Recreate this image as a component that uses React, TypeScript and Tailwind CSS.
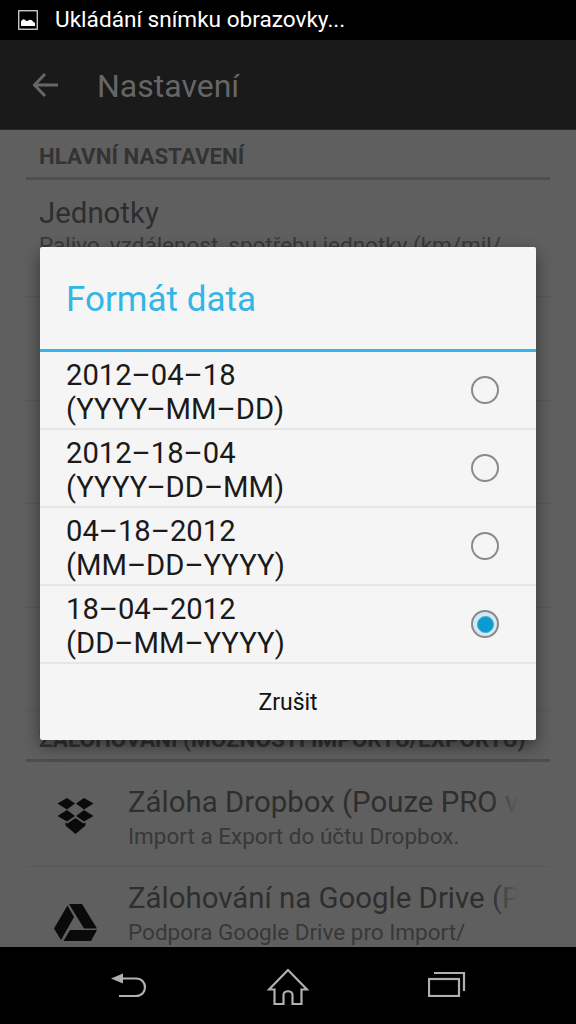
import React from 'react';

const dateFormats = [
  { date: '2012–04–18', mask: '(YYYY–MM–DD)', checked: false },
  { date: '2012–18–04', mask: '(YYYY–DD–MM)', checked: false },
  { date: '04–18–2012', mask: '(MM–DD–YYYY)', checked: false },
  { date: '18–04–2012', mask: '(DD–MM–YYYY)', checked: true },
];

function PictureIcon() {
  return (
    <svg width="20" height="20" viewBox="0 0 20 20" className="shrink-0">
      <rect x="0.75" y="0.75" width="18.5" height="18.5" fill="none" stroke="#e8e8e8" strokeWidth="1.2" />
      <path d="M3 16v-4.500c1-1.500 2.300-2.500 3.400-2 1 .5 1.600 1.600 2.800 1.500 1.100-.1 1.800-1.300 3-1.300 1.300 0 2.800 1.800 4.800 3.300V16z" fill="#fff" />
    </svg>
  );
}

function ToolbarBack() {
  return (
    <svg width="26" height="26" viewBox="0 0 26 26" fill="none" stroke="#666" strokeWidth="3">
      <path d="M26 13H3M13 2L2.500 13 13 24" />
    </svg>
  );
}

function DropboxIcon() {
  return (
    <svg width="37" height="37" viewBox="0 0 37 37" fill="#0a0a0a">
      <path d="M10 1l8 5.500-8 6-9.500-6zM27 1l9.500 5.500-9.500 6-8-6zM10 13l8 6-8 5.500-9.500-5.500zM27 13l9.500 6-9.500 5.500-8-5.500z" />
      <path d="M18.500 21l8 5.500 2-1v3L18.500 37 8.500 28.500v-3l2 1z" />
    </svg>
  );
}

function DriveIcon() {
  return (
    <svg width="43" height="38" viewBox="0 0 43 38" fill="#0a0a0a">
      <path d="M15 0h13l15 24.500H30L15 0z" />
      <path d="M13.500 1.500l6.500 11.500L7 36 0 24.500z" />
      <path d="M9.500 37l6.500-11h27L37 37z" />
    </svg>
  );
}

function SettingRow({ title, subtitle }: { title?: string; subtitle?: string }) {
  if (!title) return <div className="h-[103.500px] border-b border-[#585858]" />;
  return (
    <div className="h-[117px] px-[13px] pt-[15px] border-b border-[#585858] overflow-hidden">
      <div className="text-[29.400px] leading-[36px] text-[#2e2e2e] whitespace-nowrap">{title}</div>
      <div className="text-[22.500px] leading-[26px] text-[#383838] mt-[1px] whitespace-nowrap">{subtitle}</div>
    </div>
  );
}

function IconRow({ icon, title, subtitle, tall }: { icon: React.ReactNode; title: string; subtitle: string; tall?: boolean }) {
  return (
    <div className={`flex border-b border-[#585858] shrink-0 ${tall ? 'h-[118px]' : 'h-[105px]'}`}>
      <div className={`w-[102px] flex justify-center items-center pr-[3px] ${tall ? 'pb-[5px]' : 'pt-[2px]'}`}>{icon}</div>
      <div className={`w-[391px] overflow-hidden ${tall ? 'pt-[13px]' : 'pt-[22px]'}`}>
        <div className="relative text-[29.400px] leading-[36px] text-[#2e2e2e] whitespace-nowrap overflow-hidden">
          {title}
          <div className="absolute right-0 top-0 bottom-0 w-[28px] bg-gradient-to-r from-transparent to-[#5f5f5f]" />
        </div>
        <div className="text-[22.500px] leading-[26px] text-[#383838] mt-[3px] whitespace-nowrap">{subtitle}</div>
      </div>
    </div>
  );
}

function RadioMark({ checked }: { checked: boolean }) {
  return (
    <div className={`w-[28px] h-[28px] rounded-full border-2 border-[#8a8a8a] flex items-center justify-center ${checked ? 'bg-[#cfe9f5]' : ''}`}>
      {checked && <div className="w-[17px] h-[17px] rounded-full bg-[#0a9bd1] border border-[#4aa8c8]" />}
    </div>
  );
}

export default function App() {
  return (
    <div className="relative w-[576px] h-[1024px] overflow-hidden flex flex-col bg-[#5f5f5f] font-['Roboto',sans-serif]">
      {/* status bar */}
      <div className="h-[40px] bg-black flex items-center pl-[18px] gap-[17px] shrink-0">
        <PictureIcon />
        <span className="text-[22.600px] text-white">Ukládání snímku obrazovky...</span>
      </div>

      {/* action bar */}
      <div className="h-[90px] bg-[#1a1a1a] flex items-center pl-[32px] gap-[39px] shrink-0 border-b border-[#2a2a2a]">
        <ToolbarBack />
        <span className="text-[32px] leading-[36px] pt-[2px] text-[#666]">Nastavení</span>
      </div>

      {/* settings list behind the dialog */}
      <div className="flex-1 min-h-0 overflow-hidden px-[26px]">
        <div className="h-[50px] flex flex-col justify-end border-b-[3px] border-[#4d4d4d] px-[13px] pb-[8px]">
          <span className="text-[22.300px] leading-[26px] font-bold text-[#333]">HLAVNÍ NASTAVENÍ</span>
        </div>
        <SettingRow title="Jednotky" subtitle="Palivo, vzdálenost, spotřebu jednotky (km/mil/" />
        <SettingRow />
        <SettingRow />
        <SettingRow />
        <SettingRow />
        <div className="h-[51px] flex flex-col justify-end border-b-[3px] border-[#4d4d4d] px-[13px] pb-[7px]">
          <span className="text-[22.500px] leading-[26px] font-bold text-[#333] whitespace-nowrap">ZÁLOHOVÁNÍ (MOŽNOSTI IMPORTU/EXPORTU)</span>
        </div>
        <IconRow icon={<DropboxIcon />} title="Záloha Dropbox (Pouze PRO verze)" subtitle="Import a Export do účtu Dropbox." />
        <IconRow tall icon={<DriveIcon />} title="Zálohování na Google Drive (Pouze PRO)" subtitle="Podpora Google Drive pro Import/" />
      </div>

      {/* nav bar */}
      <div className="relative h-[77px] bg-black shrink-0 flex items-start justify-between pl-[110px] pr-[110px] pt-[21px]">
        <svg width="38" height="28" viewBox="0 0 38 28" fill="none" stroke="#b0b0b0" strokeWidth="2.200" className="mt-[3px]">
          <path d="M10 7.500h16c12 0 12 17.500 0 17.500H9" />
          <path d="M1 7.500L13 2.500v10z" fill="#b0b0b0" stroke="none" />
        </svg>
        <svg width="42" height="38" viewBox="0 0 42 38" fill="none" stroke="#b0b0b0" strokeWidth="2.200">
          <path d="M21 2L2 21.500h5.500V36h9V27c0-5 9-5 9 0v9h9V21.500H40z" />
        </svg>
        <svg width="38" height="26" viewBox="0 0 38 26" fill="none" stroke="#b0b0b0" strokeWidth="2.200" className="mt-[3px]">
          <rect x="1" y="8" width="30" height="17" />
          <path d="M6 2h30v18" />
        </svg>
      </div>

      {/* dialog */}
      <div className="absolute left-[40px] top-[247px] w-[496px] h-[493px] bg-[#f5f5f5] rounded-[2px] shadow-[0_6px_16px_rgba(0,0,0,0.45)] flex flex-col">
        <div className="h-[105px] flex items-center px-[26px] pt-[4px] border-b-[3px] border-[#33b5e5] shrink-0">
          <span className="text-[35px] text-[#33b5e5]">Formát data</span>
        </div>
        {dateFormats.map((f) => (
          <div key={f.mask} className="h-[78px] shrink-0 flex items-center justify-between pl-[26px] pr-[37px] border-b-2 border-[#e6e6e6]">
            <div className="text-[29.200px] leading-[34px] pt-[4px] text-[#1a1a1a] whitespace-nowrap">
              <div>{f.date}</div>
              <div>{f.mask}</div>
            </div>
            <RadioMark checked={f.checked} />
          </div>
        ))}
        <div className="flex-1 flex items-center justify-center pt-[3px] text-[23px] text-[#111]">Zrušit</div>
      </div>
    </div>
  );
}
